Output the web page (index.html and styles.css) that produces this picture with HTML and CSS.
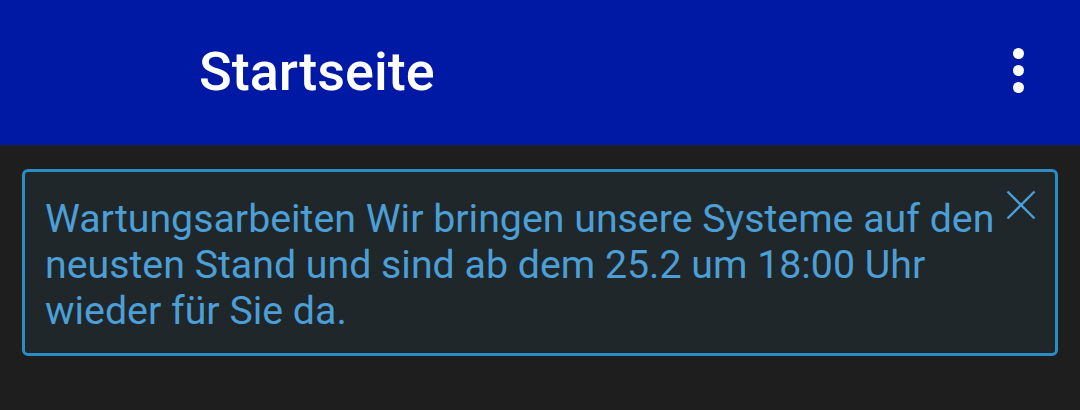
FILE: index.html
```html
<!DOCTYPE html>
<html lang="de">
<head>
    <meta charset="UTF-8">
    <meta name="viewport" content="width=device-width, initial-scale=1.0">
    <title>Startseite</title>
    <link rel="stylesheet" href="styles.css">
</head>
<body>
    <header class="toolbar">
        <h1 class="toolbar-title">Startseite</h1>
        <button class="menu-btn" aria-label="Mehr Optionen">
            <span class="dot"></span><span class="dot"></span><span class="dot"></span>
        </button>
    </header>
    <main class="content">
        <div class="alert" role="alert">
            <p class="alert-text">Wartungsarbeiten Wir bringen unsere Systeme auf den neusten Stand und sind ab dem 25.2 um 18:00 Uhr wieder für Sie da.</p>
            <button class="alert-close" aria-label="Schließen">
                <svg width="30" height="30" viewBox="0 0 30 30"><path d="M1.5 1.5 L28.5 28.5 M28.5 1.5 L1.5 28.5" stroke="currentColor" stroke-width="2.4" fill="none"/></svg>
            </button>
        </div>
    </main>
</body>
</html>
```

FILE: styles.css
```css
:root { --toolbar: #0019a5; --bg: #1e1e1e; --info: #4c9fd6; --info-border: #2a8dc4; }
* { box-sizing: border-box; }
body { margin: 0; background-color: var(--bg); font-family: Roboto, "Noto Sans", sans-serif; height: 410px; overflow: hidden; }
.toolbar { height: 145px; background-color: var(--toolbar); display: flex; align-items: center; padding: 0 56px 0 199px; }
.toolbar-title { flex: 1; margin: 0; color: #fff; font-size: 54px; font-weight: 500; line-height: 1; padding-bottom: 2px; }
.menu-btn { background: none; border: 0; padding: 0; display: flex; flex-direction: column; gap: 6px; margin-top: -5px; }
.dot { width: 11px; height: 11px; border-radius: 50%; background: #fff; }
.content { padding: 24px 22px; }
.alert { display: flex; align-items: flex-start; background-color: #1f272a; border: 3px solid var(--info-border); border-radius: 6px; padding: 24px 19px 19px 20px; }
.alert-text { flex: 1; margin: 0; color: var(--info); font-size: 39.3px; line-height: 46px; padding-right: 4px; }
.alert-close { background: none; border: 0; padding: 0; color: var(--info); margin-top: -6px; display: flex; }
```
